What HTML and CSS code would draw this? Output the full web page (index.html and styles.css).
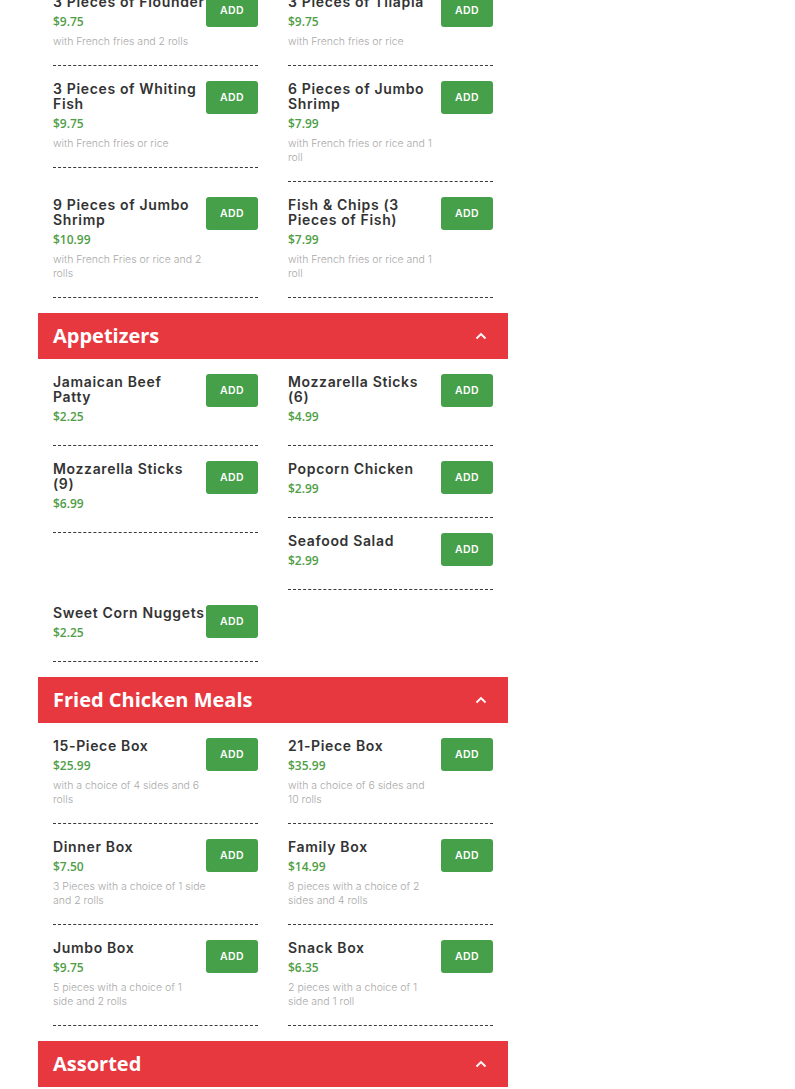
FILE: index.html
```html
<!DOCTYPE html>
<html>
<head>
<meta charset="utf-8">
<link rel="stylesheet" href="styles.css">
</head>
<body>
<div class="menu">
  <section class="category">
    <div class="items first">
      <div class="item"><div class="info"><div class="name">3 Pieces of Flounder</div><div class="price">$9.75</div><div class="desc">with French fries and 2 rolls</div></div><button class="add">ADD</button></div>
      <div class="item"><div class="info"><div class="name">3 Pieces of Tilapia</div><div class="price">$9.75</div><div class="desc">with French fries or rice</div></div><button class="add">ADD</button></div>
      <div class="item"><div class="info"><div class="name">3 Pieces of Whiting Fish</div><div class="price">$9.75</div><div class="desc">with French fries or rice</div></div><button class="add">ADD</button></div>
      <div class="item"><div class="info"><div class="name">6 Pieces of Jumbo Shrimp</div><div class="price">$7.99</div><div class="desc">with French fries or rice and 1 roll</div></div><button class="add">ADD</button></div>
      <div class="item"><div class="info"><div class="name">9 Pieces of Jumbo Shrimp</div><div class="price">$10.99</div><div class="desc">with French Fries or rice and 2 rolls</div></div><button class="add">ADD</button></div>
      <div class="item"><div class="info"><div class="name">Fish &amp; Chips (3 Pieces of Fish)</div><div class="price">$7.99</div><div class="desc">with French fries or rice and 1 roll</div></div><button class="add">ADD</button></div>
    </div>
  </section>

  <section class="category">
    <div class="cat-head"><h2>Appetizers</h2><svg class="chev" width="12" height="8" viewBox="0 0 12 8"><polyline points="1.5,6.5 6,2 10.5,6.5" fill="none" stroke="#fff" stroke-width="1.8"/></svg></div>
    <div class="items">
      <div class="item"><div class="info"><div class="name">Jamaican Beef<br>Patty</div><div class="price">$2.25</div><div class="desc"></div></div><button class="add">ADD</button></div>
      <div class="item"><div class="info"><div class="name">Mozzarella Sticks (6)</div><div class="price">$4.99</div><div class="desc"></div></div><button class="add">ADD</button></div>
      <div class="item tall"><div class="info"><div class="name">Mozzarella Sticks (9)</div><div class="price">$6.99</div><div class="desc"></div></div><button class="add">ADD</button></div>
      <div class="item"><div class="info"><div class="name">Popcorn Chicken</div><div class="price">$2.99</div><div class="desc"></div></div><button class="add">ADD</button></div>
      <div class="item"><div class="info"><div class="name">Seafood Salad</div><div class="price">$2.99</div><div class="desc"></div></div><button class="add">ADD</button></div>
      <div class="item"><div class="info"><div class="name">Sweet Corn Nuggets</div><div class="price">$2.25</div><div class="desc"></div></div><button class="add">ADD</button></div>
    </div>
  </section>

  <section class="category">
    <div class="cat-head"><h2>Fried Chicken Meals</h2><svg class="chev" width="12" height="8" viewBox="0 0 12 8"><polyline points="1.5,6.5 6,2 10.5,6.5" fill="none" stroke="#fff" stroke-width="1.8"/></svg></div>
    <div class="items">
      <div class="item"><div class="info"><div class="name">15-Piece Box</div><div class="price">$25.99</div><div class="desc">with a choice of 4 sides and 6 rolls</div></div><button class="add">ADD</button></div>
      <div class="item"><div class="info"><div class="name">21-Piece Box</div><div class="price">$35.99</div><div class="desc">with a choice of 6 sides and 10 rolls</div></div><button class="add">ADD</button></div>
      <div class="item"><div class="info"><div class="name">Dinner Box</div><div class="price">$7.50</div><div class="desc wide">3 Pieces with a choice of 1 side and 2 rolls</div></div><button class="add">ADD</button></div>
      <div class="item"><div class="info"><div class="name">Family Box</div><div class="price">$14.99</div><div class="desc">8 pieces with a choice of 2 sides and 4 rolls</div></div><button class="add">ADD</button></div>
      <div class="item"><div class="info"><div class="name">Jumbo Box</div><div class="price">$9.75</div><div class="desc">5 pieces with a choice of 1 side and 2 rolls</div></div><button class="add">ADD</button></div>
      <div class="item"><div class="info"><div class="name">Snack Box</div><div class="price">$6.35</div><div class="desc">2 pieces with a choice of 1 side and 1 roll</div></div><button class="add">ADD</button></div>
    </div>
  </section>

  <section class="category">
    <div class="cat-head"><h2>Assorted</h2><svg class="chev" width="12" height="8" viewBox="0 0 12 8"><polyline points="1.5,6.5 6,2 10.5,6.5" fill="none" stroke="#fff" stroke-width="1.8"/></svg></div>
  </section>
</div>
</body>
</html>
```
FILE: styles.css
```css
html, body {
  margin: 0;
  padding: 0;
  background: #fff;
}
body {
  font-family: "Open Sans", "Liberation Sans", sans-serif;
}
.menu {
  width: 470px;
  margin: 0 0 0 38px;
}
.cat-head {
  height: 46px;
  background: #e8383f;
  display: flex;
  align-items: center;
  justify-content: space-between;
  padding: 0 21px 0 15px;
}
.cat-head h2 {
  margin: 0;
  color: #fff;
  font-family: "Open Sans", sans-serif;
  font-weight: 700;
  font-size: 20px;
  line-height: 46px;
}
.chev {
  display: block;
}
.items {
  display: grid;
  grid-template-columns: 1fr 1fr;
  column-gap: 30px;
  row-gap: 15px;
  align-items: start;
  padding: 15px 15px 15px;
}
.items.first {
  margin-top: -21px;
}
.item {
  display: flex;
  align-items: flex-start;
  border-bottom: 1px dashed #3a3a3a;
  padding-bottom: 16px;
}
.item.tall {
  grid-row: span 2;
}
.info {
  flex: 1;
  min-width: 0;
}
.name {
  font-family: "Inter", sans-serif;
  font-weight: 600;
  font-size: 14px;
  line-height: 15px;
  color: #333;
  letter-spacing: 0.65px;
}
.price {
  margin-top: 5px;
  font-family: "Open Sans", sans-serif;
  font-weight: 600;
  font-size: 12px;
  line-height: 16px;
  color: #4f9e46;
}
.desc {
  margin-top: 5px;
  font-family: "Inter", sans-serif;
  font-weight: 300;
  font-size: 10.5px;
  line-height: 14px;
  color: #a9a9a9;
  padding-right: 4px;
}
.desc.wide {
  padding-right: 0;
  margin-right: -6px;
}
.desc:empty {
  margin-top: 4px;
}
.add {
  flex: none;
  width: 52px;
  height: 33px;
  margin: 0;
  padding: 0;
  border: none;
  border-radius: 3px;
  background: #45a049;
  color: #fff;
  font-family: "Inter", sans-serif;
  font-weight: 600;
  font-size: 10.5px;
  letter-spacing: 0.4px;
}
```
